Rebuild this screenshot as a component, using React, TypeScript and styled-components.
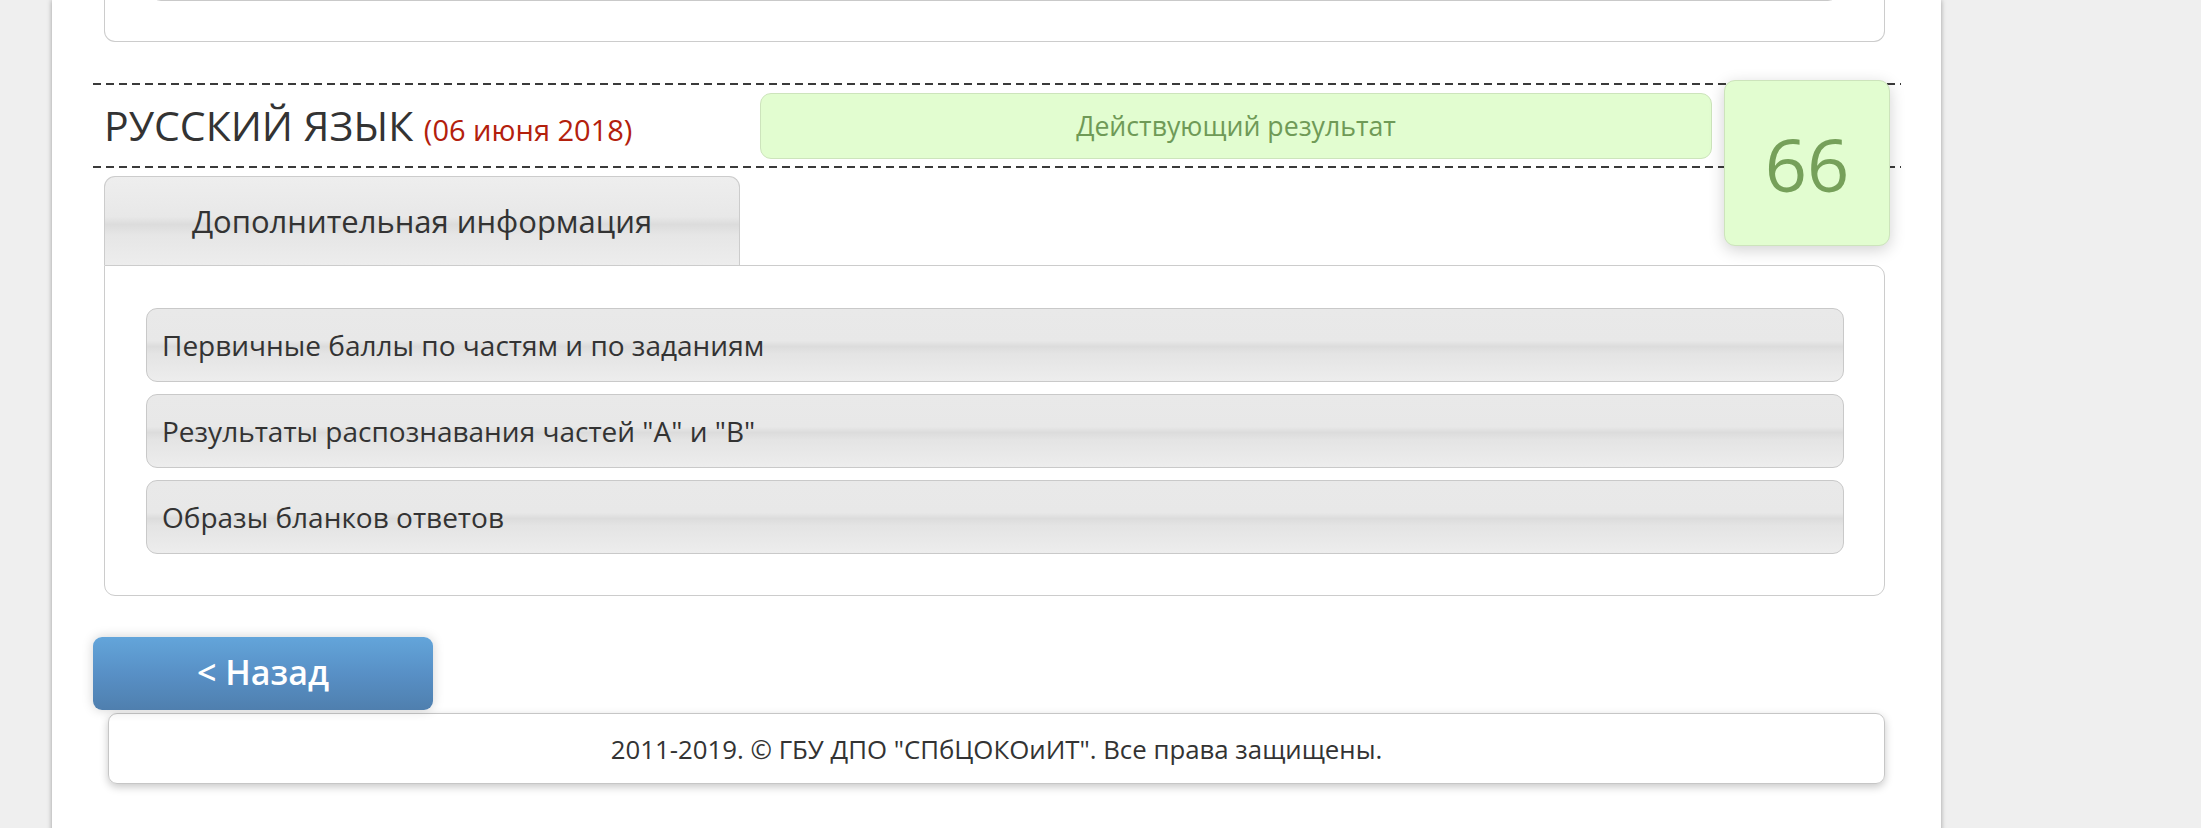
import React from "react";
import styled, { createGlobalStyle } from "styled-components";

const GlobalStyle = createGlobalStyle`
  html, body {
    margin: 0;
    padding: 0;
    background: #efefef;
    font-family: "Open Sans", "Noto Sans", Arial, sans-serif;
    color: #333;
    overflow: hidden;
  }
`;

const Page = styled.div`
  padding-left: 52px;
  height: 828px;
  overflow: hidden;
`;

const Container = styled.div`
  width: 1889px;
  min-height: 900px;
  background: #fff;
  box-shadow: 0 0 5px rgba(0, 0, 0, 0.35);
  display: flex;
  flex-direction: column;
`;

const rowGradient = `linear-gradient(to bottom, #e9e9e9 0%, #e8e8e8 44%, #dcdcdc 52%, #e4e4e4 62%, #ededed 100%)`;

const Card = styled.div<{ $clipped?: boolean }>`
  margin: ${(p) => (p.$clipped ? "-73px 56px 0 52px" : "0 56px 0 52px")};
  border: 1px solid #cccccc;
  border-top: ${(p) => (p.$clipped ? "none" : "1px solid #cccccc")};
  border-radius: 0 0 11px 11px;
  padding: 0 45px 40px 45px;
  display: flex;
  flex-direction: column;
`;

const Header = styled.div`
  position: relative;
  margin: 41px 40px 0 41px;
  height: 85px;
  padding-left: 11px;
  display: flex;
  align-items: center;
  background:
    repeating-linear-gradient(to right, #3a3a3a 0 8px, transparent 8px 13px) top left / 100% 2px no-repeat,
    repeating-linear-gradient(to right, #3a3a3a 0 8px, transparent 8px 13px) bottom left / 100% 2px no-repeat;
`;

const Title = styled.h2`
  flex: 0 0 656px;
  margin: 0;
  font-weight: 400;
  font-size: 41px;
  line-height: 1;
  color: #333;
  white-space: nowrap;
`;

const DateText = styled.span`
  font-size: 29px;
  color: #b3200c;
`;

const StatusBar = styled.div`
  width: 950px;
  height: 64px;
  border: 1px solid #cde4bc;
  border-radius: 11px;
  background: #e2fdd0;
  color: #6f9a57;
  font-size: 26.7px;
  display: flex;
  align-items: center;
  justify-content: center;
`;

const ScoreBox = styled.div`
  position: absolute;
  left: 1631px;
  top: -3px;
  width: 164px;
  height: 164px;
  border: 1px solid #cde4bc;
  border-radius: 11px;
  background: #e2fdd0;
  color: #76a05a;
  font-size: 74px;
  display: flex;
  align-items: center;
  justify-content: center;
  box-shadow: 0 4px 16px rgba(0, 0, 0, 0.18);
  z-index: 2;
`;

const TabsBlock = styled.div`
  margin: 8px 56px 0 52px;
  display: flex;
  flex-direction: column;
`;

const Tab = styled.div`
  width: 634px;
  height: 88px;
  border: 1px solid #cccccc;
  border-bottom: none;
  border-radius: 11px 11px 0 0;
  background: linear-gradient(to bottom, #eeeeee 0%, #e8e8e8 45%, #dcdcdc 54%, #e6e6e6 66%, #ededed 100%);
  font-size: 31px;
  color: #333;
  display: flex;
  align-items: center;
  justify-content: center;
`;

const Panel = styled.div`
  border: 1px solid #cccccc;
  border-radius: 0 11px 11px 11px;
  padding: 42px 40px 41px 41px;
  display: flex;
  flex-direction: column;
  gap: 12px;
`;

const Row = styled.div`
  height: 72px;
  border: 1px solid #c9c9c9;
  border-radius: 11px;
  background: ${rowGradient};
  padding-left: 15px;
  font-size: 28px;
  color: #333;
  display: flex;
  align-items: center;
`;

const BackButton = styled.button`
  margin: 41px 0 0 41px;
  width: 340px;
  height: 73px;
  border: none;
  border-radius: 9px;
  background: linear-gradient(to bottom, #63a5da 0%, #5890c6 50%, #4f7fae 100%);
  color: #fff;
  font-family: "Open Sans", "Noto Sans", Arial, sans-serif;
  font-size: 34px;
  font-weight: 600;
  box-shadow: 0 0 12px rgba(0, 0, 0, 0.18);
  display: flex;
  align-items: center;
  justify-content: center;
  padding: 0 0 4px 0;
  cursor: pointer;
  position: relative;
  z-index: 1;
`;

const Footer = styled.footer`
  margin: 3px 56px 0 56px;
  height: 69px;
  border: 1px solid #c6c6c6;
  border-radius: 9px;
  box-shadow: 0 3px 8px rgba(0, 0, 0, 0.22);
  font-size: 25.8px;
  color: #333;
  display: flex;
  align-items: center;
  justify-content: center;
`;

const rows = [
  "Первичные баллы по частям и по заданиям",
  'Результаты распознавания частей "А" и "В"',
  "Образы бланков ответов",
];

export default function App() {
  return (
    <>
      <GlobalStyle />
      <Page>
        <Container>
          <Card $clipped>
            <Row />
          </Card>
          <Header>
            <Title>
              РУССКИЙ ЯЗЫК <DateText>(06 июня 2018)</DateText>
            </Title>
            <StatusBar>Действующий результат</StatusBar>
            <ScoreBox>66</ScoreBox>
          </Header>
          <TabsBlock>
            <Tab>Дополнительная информация</Tab>
            <Panel>
              {rows.map((r) => (
                <Row key={r}>{r}</Row>
              ))}
            </Panel>
          </TabsBlock>
          <BackButton>&lt; Назад</BackButton>
          <Footer>2011-2019. © ГБУ ДПО "СПбЦОКОиИТ". Все права защищены.</Footer>
        </Container>
      </Page>
    </>
  );
}
